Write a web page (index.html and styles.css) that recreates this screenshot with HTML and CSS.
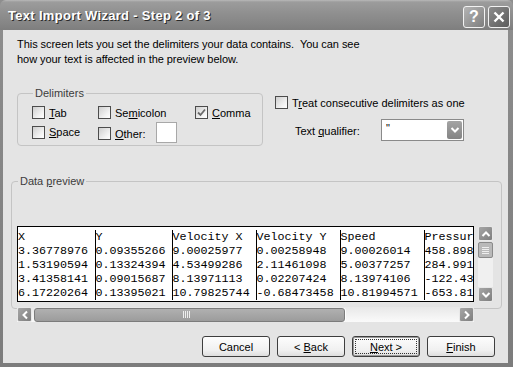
FILE: index.html
```html
<!DOCTYPE html>
<html lang="en">
<head>
    <meta charset="UTF-8">
    <title>Text Import Wizard - Step 2 of 3</title>
    <link rel="stylesheet" href="styles.css">
</head>
<body>
    <div class="window">
        <div class="titlebar">
            <span class="title">Text Import Wizard - Step 2 of 3</span>
            <div class="caption-btns">
                <span class="cap-btn help">?</span>
                <span class="cap-btn close">
                    <svg width="12" height="12" viewBox="0 0 12 12"><path d="M1.5 1.5 L10.5 10.5 M10.5 1.5 L1.5 10.5" stroke="#fff" stroke-width="2.4" fill="none"/></svg>
                </span>
            </div>
        </div>

        <div class="client">
            <p class="intro">This screen lets you set the delimiters your data contains.&nbsp; You can see<br>how your text is affected in the preview below.</p>

            <div class="options">
                <fieldset class="group delims">
                    <legend>Delimiters</legend>
                    <div class="delim-grid">
                        <label class="check"><span class="box"></span><span><u>T</u>ab</span></label>
                        <label class="check"><span class="box"></span><span>Se<u>m</u>icolon</span></label>
                        <label class="check"><span class="box checked"><svg width="11" height="11" viewBox="0 0 11 11"><path d="M2 5.5 L4.5 8 L9 2.5" stroke="#6a6a6a" stroke-width="1.8" fill="none"/></svg></span><span><u>C</u>omma</span></label>
                        <label class="check"><span class="box"></span><span><u>S</u>pace</span></label>
                        <label class="check other"><span class="box"></span><span><u>O</u>ther:</span><span class="other-input"></span></label>
                    </div>
                </fieldset>

                <div class="side">
                    <label class="check"><span class="box"></span><span>T<u>r</u>eat consecutive delimiters as one</span></label>
                    <div class="qualifier">
                        <span>Text <u>q</u>ualifier:</span>
                        <div class="combo">
                            <span class="combo-value">"</span>
                            <span class="drop">
                                <svg width="10" height="8" viewBox="0 0 10 8"><path d="M1.5 2 L5 5.5 L8.5 2" stroke="#fff" stroke-width="2" fill="none"/></svg>
                            </span>
                        </div>
                    </div>
                </div>
            </div>

            <fieldset class="group preview">
                <legend>Data <u>p</u>review</legend>
                <div class="preview-row">
                    <div class="sheet">
                        <table>
                            <colgroup>
                                <col style="width:77px"><col style="width:77px"><col style="width:84px">
                                <col style="width:84px"><col style="width:84px"><col style="width:84px">
                            </colgroup>
                            <tr><td>X</td><td>Y</td><td>Velocity X</td><td>Velocity Y</td><td>Speed</td><td>Pressure</td></tr>
                            <tr><td>3.36778976</td><td>0.09355266</td><td>9.00025977</td><td>0.00258948</td><td>9.00026014</td><td>458.89840</td></tr>
                            <tr><td>1.53190594</td><td>0.13324394</td><td>4.53499286</td><td>2.11461098</td><td>5.00377257</td><td>284.99160</td></tr>
                            <tr><td>3.41358141</td><td>0.09015687</td><td>8.13971113</td><td>0.02207424</td><td>8.13974106</td><td>-122.43710</td></tr>
                            <tr><td>6.17220264</td><td>0.13395021</td><td>10.79825744</td><td>-0.68473458</td><td>10.81994571</td><td>-653.81320</td></tr>
                        </table>
                    </div>
                    <div class="vscroll">
                        <span class="sb-btn"><svg width="10" height="8" viewBox="0 0 10 8"><path d="M1.5 6 L5 2.5 L8.5 6" stroke="#fff" stroke-width="2" fill="none"/></svg></span>
                        <span class="vthumb"><i></i><i></i><i></i><i></i></span>
                        <span class="vtrack"></span>
                        <span class="sb-btn"><svg width="10" height="8" viewBox="0 0 10 8"><path d="M1.5 2 L5 5.5 L8.5 2" stroke="#fff" stroke-width="2" fill="none"/></svg></span>
                    </div>
                </div>
                <div class="hscroll">
                    <span class="sb-btn"><svg width="8" height="10" viewBox="0 0 8 10"><path d="M6 1.5 L2.5 5 L6 8.5" stroke="#fff" stroke-width="2" fill="none"/></svg></span>
                    <span class="hthumb"><span class="grip"><i></i><i></i><i></i><i></i></span></span>
                    <span class="htrack"></span>
                    <span class="sb-btn"><svg width="8" height="10" viewBox="0 0 8 10"><path d="M2 1.5 L5.5 5 L2 8.5" stroke="#fff" stroke-width="2" fill="none"/></svg></span>
                </div>
            </fieldset>

            <div class="buttons">
                <button>Cancel</button>
                <button>&lt; <u>B</u>ack</button>
                <button class="default"><span class="focus"><u>N</u>ext &gt;</span></button>
                <button><u>F</u>inish</button>
            </div>
        </div>
    </div>
</body>
</html>
```

FILE: styles.css
```css
body {
    margin: 0;
    font-family: "Liberation Sans", Arial, sans-serif;
    font-size: 11px;
    color: #000;
    background: #fff;
}
.window {
    width: 513px;
    height: 367px;
    background: linear-gradient(#8e8e8e, #7c7c7c);
    display: flex;
    flex-direction: column;
}
.titlebar {
    height: 30px;
    display: flex;
    align-items: center;
    justify-content: space-between;
    padding: 0 3px 0 8px;
    box-sizing: border-box;
    background: linear-gradient(#b9b9b9 0, #9c9c9c 2px, #8f8f8f 45%, #858585 80%, #7e7e7e 100%);
    border-radius: 6px 6px 0 0;
}
.title {
    color: #fff;
    font-weight: bold;
    font-size: 13px;
    letter-spacing: 0.3px;
    text-shadow: 1px 1px 0 #2a2a2a;
    margin-top: 1px;
}
.caption-btns { display: flex; gap: 3px; margin-top: 3px; }
.cap-btn {
    width: 20px;
    height: 20px;
    border: 1px solid #f2f2f2;
    border-radius: 3px;
    display: flex;
    align-items: center;
    justify-content: center;
    color: #fff;
    font-weight: bold;
    font-size: 16px;
}
.help { background: linear-gradient(135deg, #b4b4b4, #7e7e7e); }
.close { background: linear-gradient(135deg, #8c8c8c, #5c5c5c); }

.client {
    flex: 1;
    margin: 0 5px 4px 3px;
    background: #e4e4e4;
    display: flex;
    flex-direction: column;
}
.intro {
    margin: 0;
    padding: 7px 0 0 14px;
    line-height: 15px;
    letter-spacing: -0.05px;
}
u { text-decoration: underline; text-underline-offset: 1px; }

.options {
    display: flex;
    gap: 12px;
    margin: 20px 0 0 14px;
}
.group {
    margin: 0;
    border: 1px solid #c4c4c4;
    border-radius: 4px;
}
.group legend {
    padding: 0 2px;
    margin-left: 1px;
    line-height: 13px;
    color: #3c3c3c;
}
.delims {
    width: 246px;
    box-sizing: border-box;
    padding: 6px 0 3px 14px;
}
.delim-grid {
    display: grid;
    grid-template-columns: 66px 97px auto;
    grid-template-rows: 13px 20px;
    row-gap: 3px;
    align-items: center;
}
.check {
    display: flex;
    align-items: center;
    gap: 4px;
    white-space: nowrap;
}
.box {
    width: 11px;
    height: 11px;
    border: 1px solid #4c4c4c;
    background: linear-gradient(135deg, #cfcfcf, #f4f4f4 70%, #fff);
    display: flex;
    align-items: center;
    justify-content: center;
    flex: none;
}
.other-input {
    width: 19px;
    height: 19px;
    margin-left: 6px;
    border: 1px solid #a8a8a8;
    background: #fff;
}
.other .box { margin-top: 3px; }
.other > span:nth-child(2) { margin-top: 3px; }

.side { padding-top: 9px; }
.qualifier {
    display: flex;
    align-items: center;
    margin: 10px 0 0 20px;
}
.qualifier > span { width: 86px; margin-top: 2px; }
.combo {
    width: 81px;
    height: 20px;
    border: 1px solid #8a8a8a;
    background: #fff;
    display: flex;
    justify-content: space-between;
}
.combo-value { padding: 2px 0 0 4px; }
.drop {
    width: 15px;
    height: 18px;
    margin: 1px;
    border-radius: 2px;
    background: linear-gradient(#a4a4a4, #848484);
    display: flex;
    align-items: center;
    justify-content: center;
}

.preview {
    margin: 29px 6px 0 8px;
    padding: 38px 6px 0 5px;
    height: 94px;
    box-sizing: content-box;
}
.preview-row { display: flex; gap: 4px; }
.sheet {
    width: 455px;
    height: 74px;
    border: 1px solid #000;
    background: #fff;
    overflow: hidden;
}
.sheet table {
    border-collapse: collapse;
    table-layout: fixed;
    width: 490px;
    margin-top: 3px;
    font-family: "Liberation Mono", "Courier New", monospace;
    font-size: 11.7px;
    color: #000;
}
.sheet td {
    padding: 0;
    height: 14px;
    line-height: 14px;
    white-space: nowrap;
    overflow: hidden;
    border-left: 1px solid #000;
}
.sheet td:first-child { border-left: none; }

.vscroll {
    width: 15px;
    height: 76px;
    display: flex;
    flex-direction: column;
}
.sb-btn {
    width: 13px;
    height: 13px;
    border: 1px solid #e8e8e8;
    border-radius: 2px;
    background: linear-gradient(135deg, #a6a6a6, #7e7e7e);
    display: flex;
    align-items: center;
    justify-content: center;
    flex: none;
}
.vthumb {
    margin-top: 1px;
    height: 14px;
    border: 1px solid #8a8a8a;
    border-radius: 2px;
    background: #b9b9b9;
    display: flex;
    flex-direction: column;
    align-items: center;
    justify-content: center;
    gap: 1px;
}
.vthumb i { display: block; width: 7px; height: 1px; background: #eee; }
.vtrack { flex: 1; background: #f0f0f0; }

.hscroll {
    display: flex;
    align-items: center;
    width: 457px;
    height: 15px;
    margin-top: 5px;
    background: linear-gradient(#e8e8e8, #fafafa);
}
.hthumb {
    width: 309px;
    height: 12px;
    margin-left: 2px;
    border: 1px solid #7c7c7c;
    border-radius: 3px;
    background: linear-gradient(#b0b0b0, #9c9c9c);
    display: flex;
    justify-content: center;
    align-items: center;
    box-shadow: 1px 0 0 #fff;
}
.grip { display: flex; gap: 1px; margin-right: 6px; }
.grip i { display: block; width: 1px; height: 7px; background: #eee; }
.htrack { flex: 1; }

.buttons {
    display: flex;
    justify-content: flex-end;
    gap: 7px;
    margin-top: auto;
    padding: 0 13px 6px 0;
}
button {
    width: 68px;
    height: 21px;
    padding: 0;
    border: 1px solid #3e3e3e;
    border-radius: 3px;
    background: linear-gradient(#fdfdfd, #f0f0f0 70%, #dedede);
    font-family: "Liberation Sans", Arial, sans-serif;
    font-size: 11px;
    color: #000;
}
button.default {
    box-shadow: inset 0 0 0 1px #9a9a9a;
    display: flex;
    padding: 2px;
}
button .focus {
    flex: 1;
    border: 1px dotted #333;
    display: flex;
    align-items: center;
    justify-content: center;
}
```
